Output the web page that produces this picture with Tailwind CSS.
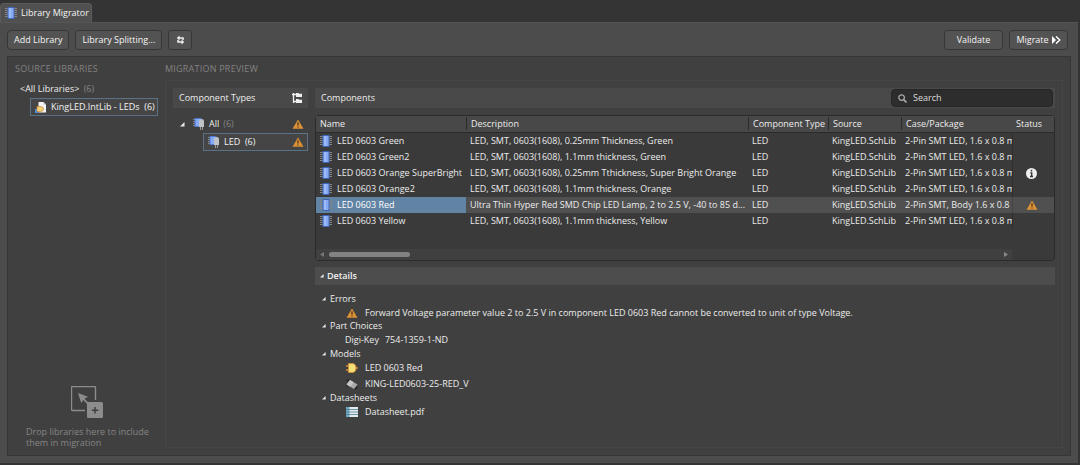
<!DOCTYPE html>
<html lang="en">
<head>
<meta charset="utf-8">
<title>Library Migrator</title>
<script src="https://cdn.jsdelivr.net/npm/@tailwindcss/browser@4"></script>
</head>
<body class="flex min-h-screen flex-col bg-[#343434] pt-[3px] pb-[2px] font-['Open_Sans','Noto_Sans',sans-serif] text-[9px] leading-4 text-[#ececec] [&_svg]:shrink-0">

<svg class="hidden" aria-hidden="true">
  <symbol id="chip" viewBox="0 0 12 12">
    <path d="M0 1.500h12M0 3.500h12M0 5.500h12M0 7.500h12M0 9.500h12" stroke="#858585" stroke-width="1"/>
    <path d="M2.500 0h7v12h-7z" fill="#3f66b8"/><path d="M3.500 1h5v10h-5z" fill="#86aaf4"/>
    <path d="M4 1h2v10h-2z" fill="#9bbafa"/>
  </symbol>
  <symbol id="parts" viewBox="0 0 12 12">
    <path d="M0 1.500h3M0 3.500h3M0 5.500h3M0 7.500h3" stroke="#8a8a8a"/>
    <path d="M1.500 0h7v9h-7z" fill="#4a70c4"/><path d="M2.500 .8h5v7.400h-5z" fill="#86aaf4"/>
    <path d="M6 3q0-2 2.500-2t2.500 2v6h-5z" fill="#bfc3c8"/><path d="M7.500 9v3M9.500 9v3" stroke="#9b9b9b"/>
  </symbol>
  <symbol id="warn" viewBox="0 0 12 10">
    <path d="M6 0.500 11.500 9.700H.5z" fill="#dc9135"/>
    <path d="M6 3.300v3.200M6 7.400v1.200" stroke="#49351f" stroke-width="1.300"/>
  </symbol>
  <symbol id="tri" viewBox="0 0 5 5"><path d="M4.500 0v4.500H0z" fill="#e8e8e8"/></symbol>
</svg>

<nav class="flex">
  <button class="flex h-[19px] items-center gap-1 rounded-t-sm border border-b-0 border-[#5c5c5c] bg-[#505050] pr-[2px] pl-1 text-[#f4f4f4]">
    <svg class="size-3"><use href="#chip"/></svg>Library Migrator
  </button>
</nav>

<main class="mr-[2px] flex grow flex-col border-t border-[#555] bg-[#4c4c4c] px-[7px] pt-[7px] pb-[7px]">
  <div class="mb-[6px] flex items-center gap-[6px] pr-[3px] text-[#f4f4f4]">
    <button class="h-5 rounded-sm border border-[#363636] bg-[#535353] px-[6px]">Add Library</button>
    <button class="h-5 rounded-sm border border-[#363636] bg-[#535353] px-[6px]">Library Splitting...</button>
    <button class="flex h-5 w-6 items-center justify-center rounded-sm border border-[#363636] bg-[#535353]" aria-label="Refresh">
      <svg class="h-[10px] w-[9px]" viewBox="0 0 9 10" fill="none" stroke="#f0f0f0" stroke-width="1.500"><path d="M7 5V3H3M2 5v2h4"/><path d="M3.500 .5v5L.8 3zM5.500 4.500v5l2.700-2.500z" fill="#f0f0f0" stroke="none"/></svg>
    </button>
    <button class="ml-auto h-5 w-[59px] rounded-sm border border-[#363636] bg-[#535353]">Validate</button>
    <button class="flex h-5 w-[59px] items-center justify-center gap-[3px] rounded-sm border border-[#363636] bg-[#535353]">Migrate
      <svg class="h-2 w-[9px]" viewBox="0 0 9 8"><path d="M0 0l4 4-4 4z" fill="#fff"/><path d="M4 .4 7.800 4 4 7.600" fill="none" stroke="#fff" stroke-width="1.400"/></svg>
    </button>
  </div>

  <div class="flex grow border border-[#363636] bg-[#404040] pr-[7px] pb-[7px]">
    <aside class="flex w-[157px] shrink-0 flex-col pt-1 pl-[7px]">
      <h2 class="tracking-wide text-[#828282]">SOURCE LIBRARIES</h2>
      <div class="mt-1 pl-[5px]">&lt;All Libraries&gt; <span class="pl-[2px] text-[#858585]">(6)</span></div>
      <div class="mt-px ml-[15px] flex h-[18px] w-32 items-center gap-1 border border-[#5a7186] bg-[#454545] pl-1 text-[#f4f4f4]">
        <svg class="h-[11px] w-3" viewBox="0 0 12 11"><path d="M3.500 0h5L11 2.500v8H3.500z" fill="#f4f4f4"/><path d="M8.500 0v2.500H11z" fill="#bbb"/><path d="M0 7h3v4H0z" fill="#4c8be0"/><path d="M2 4.500h3.500q3 0 3 2.500t-3 2.500H2z" fill="#efcf78" stroke="#c48a35" stroke-width=".7"/></svg>
        <span class="whitespace-nowrap">KingLED.IntLib - LEDs&nbsp; (6)</span>
      </div>
      <div class="mt-auto pl-[11px] text-[#858585]">
        <svg class="ml-[45px] size-8" viewBox="0 0 32 32"><path d="M24.500 14V1.500q0-1-1-1h-22q-1 0-1 1v22q0 1 1 1H14" fill="none" stroke="#8c8c8c" stroke-width="1.400"/><path d="M7 7l10 3.700-3.500 2 4.500 4.500-1.300 1.300-4.500-4.500-2 3z" fill="#8c8c8c"/><rect x="16" y="16" width="16" height="16" rx="1.500" fill="#8c8c8c"/><path d="M24 21v6.500M20.800 24.200h6.500" stroke="#404040" stroke-width="1.500"/></svg>
        <p class="mt-2 leading-[11px]">Drop libraries here to include<br>them in migration</p>
      </div>
    </aside>

    <section class="flex min-w-0 grow flex-col pt-1">
      <h2 class="tracking-wide text-[#828282]">MIGRATION PREVIEW</h2>
      <div class="mt-[3px] flex grow gap-[7px] border border-[#464646] p-[7px]">
        <div class="w-[135px] shrink-0">
          <div class="flex h-5 items-center justify-between bg-[#494949] pr-[6px] pl-[6px]">
            <h3>Component Types</h3>
            <svg class="size-[10px]" viewBox="0 0 10 10"><path d="M1.500 0v10M0 1.500h5M1 8.500h4" stroke="#f0f0f0" stroke-width="1.300"/><path d="M4 0h2.500l.6.700H10V4H4zM4 6h2.500l.6.700H10V10H4z" fill="#f0f0f0"/></svg>
          </div>
          <div class="mt-[7px] flex h-[18px] items-center pr-1 pl-[7px]">
            <svg class="mr-2 size-[5px]"><use href="#tri"/></svg>
            <svg class="mr-1 size-3"><use href="#parts"/></svg>
            All <span class="pl-[4px] text-[#858585]">(6)</span>
            <svg class="ml-auto h-[10px] w-3"><use href="#warn"/></svg>
          </div>
          <div class="ml-[30px] flex h-[18px] items-center border border-[#5a7186] bg-[#454545] pr-[3px] pl-1 text-[#f4f4f4]">
            <svg class="mr-1 size-3"><use href="#parts"/></svg>
            LED&nbsp; (6)
            <svg class="ml-auto h-[10px] w-3"><use href="#warn"/></svg>
          </div>
        </div>

        <div class="min-w-0 grow">
          <div class="flex h-5 items-center bg-[#494949] pr-[2px] pl-[6px]">
            <h3>Components</h3>
            <label class="ml-auto flex h-[18px] w-[162px] items-center gap-[6px] rounded-sm border border-[#262626] bg-[#2d2d2d] pl-[6px]">
              <svg class="size-[9px]" viewBox="0 0 9 9" fill="none" stroke="#a8a8a8"><circle cx="3.600" cy="3.600" r="2.800" stroke-width="1.300"/><path d="M5.700 5.700 8.500 8.500" stroke-width="1.700"/></svg>
              <input type="search" aria-label="Search" placeholder="Search" class="w-32 bg-transparent outline-none placeholder:text-[#dcdcdc]">
            </label>
          </div>

          <div class="mt-[7px] rounded-sm border border-[#2b2b2b] bg-[#3a3a3a]">
            <table class="w-full table-fixed border-collapse text-left whitespace-nowrap">
              <colgroup><col class="w-[150px]"><col><col class="w-[80px]"><col class="w-[73px]"><col class="w-[111px]"><col class="w-[42px]"></colgroup>
              <thead class="border-b border-[#2b2b2b] bg-[#484848]">
                <tr class="h-4 *:p-0 *:font-normal">
                  <th><span class="pl-1">Name</span></th>
                  <th><span class="border-l border-[#2b2b2b] pl-1">Description</span></th>
                  <th><span class="border-l border-[#2b2b2b] pl-1">Component Type</span></th>
                  <th><span class="border-l border-[#2b2b2b] pl-1">Source</span></th>
                  <th><span class="border-l border-[#2b2b2b] pl-1">Case/Package</span></th>
                  <th><span class="pl-1">Status</span></th>
                </tr>
              </thead>
              <tbody>
                <tr class="h-4 *:overflow-hidden *:p-0 *:pl-1"><td><svg class="mr-[5px] inline size-3 align-[-3px]"><use href="#chip"/></svg>LED 0603 Green</td><td>LED, SMT, 0603(1608), 0.25mm Thickness, Green</td><td>LED</td><td>KingLED.SchLib</td><td>2-Pin SMT LED, 1.6 x 0.8 mm</td><td class="border-l border-[#2f2f2f]"></td></tr>
                <tr class="h-4 *:overflow-hidden *:p-0 *:pl-1"><td><svg class="mr-[5px] inline size-3 align-[-3px]"><use href="#chip"/></svg>LED 0603 Green2</td><td>LED, SMT, 0603(1608), 1.1mm thickness, Green</td><td>LED</td><td>KingLED.SchLib</td><td>2-Pin SMT LED, 1.6 x 0.8 mm</td><td class="border-l border-[#2f2f2f]"></td></tr>
                <tr class="h-4 *:overflow-hidden *:p-0 *:pl-1"><td><svg class="mr-[5px] inline size-3 align-[-3px]"><use href="#chip"/></svg>LED 0603 Orange SuperBright</td><td>LED, SMT, 0603(1608), 0.25mm Tthickness, Super Bright Orange</td><td>LED</td><td>KingLED.SchLib</td><td>2-Pin SMT LED, 1.6 x 0.8 mm</td><td class="border-l border-[#2f2f2f]"><svg class="ml-[9px] size-[11px]" viewBox="0 0 11 11"><circle cx="5.500" cy="5.500" r="5.500" fill="#eee"/><path d="M5.500 1.800v1.700M4.300 4.900h1.400v3.500M4 8.500h3" fill="none" stroke="#333" stroke-width="1.400"/></svg></td></tr>
                <tr class="h-4 *:overflow-hidden *:p-0 *:pl-1"><td><svg class="mr-[5px] inline size-3 align-[-3px]"><use href="#chip"/></svg>LED 0603 Orange2</td><td>LED, SMT, 0603(1608), 1.1mm thickness, Orange</td><td>LED</td><td>KingLED.SchLib</td><td>2-Pin SMT LED, 1.6 x 0.8 mm</td><td class="border-l border-[#2f2f2f]"></td></tr>
                <tr class="h-4 bg-[#505050] *:overflow-hidden *:p-0 *:pl-1"><td class="bg-[#6184a4] text-white"><svg class="mr-[5px] inline size-3 align-[-3px]"><use href="#chip"/></svg>LED 0603 Red</td><td>Ultra Thin Hyper Red SMD Chip LED Lamp, 2 to 2.5 V, -40 to 85 d...</td><td>LED</td><td>KingLED.SchLib</td><td>2-Pin SMT, Body 1.6 x 0.8</td><td class="border-l border-[#454545]"><svg class="ml-[9px] h-[10px] w-3"><use href="#warn"/></svg></td></tr>
                <tr class="h-4 *:overflow-hidden *:p-0 *:pl-1"><td><svg class="mr-[5px] inline size-3 align-[-3px]"><use href="#chip"/></svg>LED 0603 Yellow</td><td>LED, SMT, 0603(1608), 1.1mm thickness, Yellow</td><td>LED</td><td>KingLED.SchLib</td><td>2-Pin SMT LED, 1.6 x 0.8 mm</td><td class="border-l border-[#2f2f2f]"></td></tr>
              </tbody>
            </table>
            <div class="mt-5 mr-[42px] flex h-[11px] items-center bg-[#404040] px-1">
              <svg class="h-[5px] w-[4px]" viewBox="0 0 4 5"><path d="M4 0v5L0 2.500z" fill="#777"/></svg>
              <div class="ml-[5px] h-[5px] w-[81px] rounded-full bg-[#828282]"></div>
              <svg class="ml-auto h-[5px] w-[4px]" viewBox="0 0 4 5"><path d="M0 0v5l4-2.500z" fill="#888"/></svg>
            </div>
          </div>

          <h3 class="mt-[6px] flex h-[18px] items-center gap-[3px] bg-[#4d4d4d] pl-[5px] font-semibold text-[#f0f0f0]"><svg class="size-1"><use href="#tri"/></svg>Details</h3>
          <div class="pt-[7px] pl-[7px]">
            <h4 class="flex h-[14px] items-center gap-1"><svg class="size-1"><use href="#tri"/></svg>Errors</h4>
            <p class="flex h-[13px] items-center gap-[7px] pl-6"><svg class="h-[10px] w-3"><use href="#warn"/></svg>Forward Voltage parameter value 2 to 2.5 V in component LED 0603 Red cannot be converted to unit of type Voltage.</p>
            <h4 class="flex h-[14px] items-center gap-1"><svg class="size-1"><use href="#tri"/></svg>Part Choices</h4>
            <p class="flex h-[14px] items-center gap-[6px] pl-[23px]"><span>Digi-Key</span><span>754-1359-1-ND</span></p>
            <h4 class="flex h-[13px] items-center gap-1"><svg class="size-1"><use href="#tri"/></svg>Models</h4>
            <p class="flex h-4 items-center gap-[7px] pl-6"><svg class="h-[10px] w-3" viewBox="0 0 12 10"><path d="M0 3h3M0 7h3M8 5h4" stroke="#d48b35" stroke-width="1.300"/><path d="M2.500 .5h3.500q4 0 4 4.500t-4 4.500H2.500z" fill="#f3df78" stroke="#d48b35"/></svg>LED 0603 Red</p>
            <p class="flex h-4 items-center gap-[7px] pl-6"><svg class="h-[11px] w-3" viewBox="0 0 12 11"><path d="M1 2.500 3 0.500M0 5.500l2 2M9 10l2-2" stroke="#222" stroke-width="1.500"/><path d="M4 1l7.500 4.500L8 10 .5 5.500z" fill="#aaa"/><path d="M4 1l3.700 2.200L4.200 7.700.5 5.500z" fill="#c6c6c6"/></svg>KING-LED0603-25-RED_V</p>
            <h4 class="flex h-3 items-center gap-1"><svg class="size-1"><use href="#tri"/></svg>Datasheets</h4>
            <p class="flex h-4 items-center gap-[7px] pl-6"><svg class="h-[10px] w-3" viewBox="0 0 12 10"><path d="M0 0h12v10H0z" fill="#e2edf2"/><path d="M0 0h3.500v10H0z" fill="#6fa9c6"/><path d="M0 2.500h12M0 5h12M0 7.500h12" stroke="#54798c" stroke-width=".8"/></svg><a href="#datasheet">Datasheet.pdf</a></p>
          </div>
        </div>
      </div>
    </section>
  </div>
</main>
</body>
</html>
